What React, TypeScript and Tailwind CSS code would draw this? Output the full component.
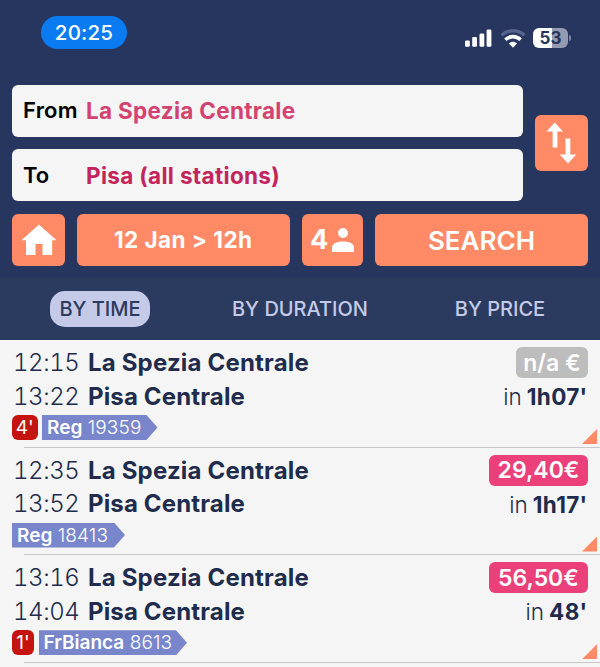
type Trip = {
  dep: string;
  from: string;
  arr: string;
  to: string;
  delay?: string;
  train: string;
  number: string;
  chipWidth: string;
  price: string;
  priceClass: string;
  duration: string;
};

const trips: Trip[] = [
  { dep: "12:15", from: "La Spezia Centrale", arr: "13:22", to: "Pisa Centrale", delay: "4'", train: "Reg", number: "19359", chipWidth: "w-[115.5px]", price: "n/a €", priceClass: "w-[72px] bg-[#bdbdbd]", duration: "1h07'" },
  { dep: "12:35", from: "La Spezia Centrale", arr: "13:52", to: "Pisa Centrale", train: "Reg", number: "18413", chipWidth: "w-[113px]", price: "29,40€", priceClass: "w-[99px] bg-[#ec407a]", duration: "1h17'" },
  { dep: "13:16", from: "La Spezia Centrale", arr: "14:04", to: "Pisa Centrale", delay: "1'", train: "FrBianca", number: "8613", chipWidth: "w-[148.5px]", price: "56,50€", priceClass: "w-[99px] bg-[#ec407a]", duration: "48'" },
];

function StatusBar() {
  return (
    <div className="flex h-[84px] items-start justify-between pt-4 pl-[41px] pr-[29px]">
      <div className="flex h-[33px] w-[86px] items-center justify-center rounded-full bg-[#0a7bf0] pt-px text-[20.5px] font-medium tracking-[0.2px] text-white">20:25</div>
      <div className="flex items-center pt-3">
        <svg width="27" height="18" viewBox="0 0 27 18" fill="#fff">
          <rect x="0" y="11.5" width="4.8" height="6.2" rx="1.3" />
          <rect x="7.2" y="8.1" width="4.8" height="9.6" rx="1.3" />
          <rect x="14.5" y="4.6" width="4.8" height="13.1" rx="1.3" />
          <rect x="21.6" y="0.4" width="4.8" height="17.3" rx="1.3" />
        </svg>
        <svg className="ml-[7.5px]" width="26" height="19" viewBox="0 0 26 19" fill="none">
          <path d="M1.5 6.3C8 .3 18 .3 24.5 6.3" stroke="#56638c" strokeWidth="3.4" />
          <path d="M5.4 10.8C9.7 6.6 16.3 6.6 20.6 10.8" stroke="#fff" strokeWidth="3.6" />
          <path d="M8.9 14.4C11.3 12.3 14.7 12.3 17.1 14.4L13 18.7Z" fill="#fff" />
        </svg>
        <div className="ml-[7.5px] flex h-5 w-[35px] items-center justify-center rounded-[6px] bg-linear-to-r from-white from-53% to-[#939ab1] to-53% pt-px text-[17px] font-bold text-[#27365f]">53</div>
        <div className="ml-px h-[6px] w-[2px] rounded-r-full bg-[#7d86a2]" />
      </div>
    </div>
  );
}

function SearchForm() {
  return (
    <div className="flex h-[194px] flex-col gap-3 px-3 pt-[0.5px]">
      <div className="flex items-center gap-3">
        <div className="flex w-[511px] flex-col gap-3">
          <div className="flex h-[52.5px] items-center rounded-[6px] bg-[#f5f5f5] pl-[11px] text-[22px] font-semibold">
            <span className="w-[63px] tracking-[0.2px] text-black">From</span>
            <span className="text-[22.5px] font-bold tracking-[0.3px] text-[#d4426f]">La Spezia Centrale</span>
          </div>
          <div className="flex h-[52px] items-center rounded-[6px] bg-[#f5f5f5] pt-px pl-[11px] text-[22px] font-semibold">
            <span className="w-[63px] text-black">To</span>
            <span className="text-[22.5px] font-bold tracking-[0.32px] text-[#c2245b]">Pisa (all stations)</span>
          </div>
        </div>
        <div className="flex h-14 w-[53px] items-center justify-center rounded-[6px] bg-[#ff8a65]">
          <svg width="53" height="56" viewBox="0 0 53 56" fill="#fff">
            <path d="M19.7 7.5L28 16.5H22.4V32.5H17.6V16.5H11.5Z" />
            <path d="M33 48.5L24.7 39.5H30.5V23.5H35.3V39.5H41.2Z" />
          </svg>
        </div>
      </div>
      <div className="mt-[0.5px] flex h-[52.5px] gap-3 text-[22px] font-semibold text-white">
        <div className="flex w-[53px] items-center justify-center rounded-[6px] bg-[#ff8a65]">
          <svg width="36" height="32" viewBox="0 0 36 32" fill="#fff">
            <path d="M18 0.5L35.5 16.3H31.2V31H21.5V20H14.5V31H5V16.3H0.5Z" />
          </svg>
        </div>
        <div className="flex w-[212.5px] items-center justify-center rounded-[6px] bg-[#ff8a65] pt-px text-[22.5px] font-bold tracking-[0.45px]">12 Jan &gt; 12h</div>
        <div className="flex w-[61.5px] items-center justify-center gap-1 rounded-[6px] bg-[#ff8a65] text-[27px] font-bold">
          4
          <svg width="22" height="26" viewBox="0 0 22 26" fill="#fff">
            <circle cx="11" cy="6" r="5" />
            <path d="M0 25V20.5C0 16.5 5 14.5 11 14.5S22 16.5 22 20.5V25Z" />
          </svg>
        </div>
        <div className="flex w-[213px] items-center justify-center rounded-[6px] bg-[#ff8a65] pt-px text-[26px]">SEARCH</div>
      </div>
    </div>
  );
}

function Tabs() {
  return (
    <div className="flex h-[62px] items-center bg-[#2a3b5f] text-[20px] font-medium text-[#c5cae9]">
      <div className="flex w-[200px] justify-center">
        <div className="flex h-9 w-[100px] items-center justify-center rounded-[15px] bg-[#c5cae9] text-[#2a3b5f]">BY TIME</div>
      </div>
      <div className="w-[200px] text-center">BY DURATION</div>
      <div className="w-[200px] text-center">BY PRICE</div>
    </div>
  );
}

function TripRow({ trip }: { trip: Trip }) {
  return (
    <div className="flex h-[107.6px] shrink-0 flex-col">
      <div className="flex h-[106.6px] justify-between pl-3">
        <div className="flex flex-col whitespace-nowrap text-[24px] leading-[33.5px] text-[#212c4c]">
          <div className="flex pt-[6px]">
            <span className="w-[76px] pl-px font-[340] tracking-[-0.45px] tabular-nums">{trip.dep}</span>
            <span className="font-bold tracking-[0.18px]">{trip.from}</span>
          </div>
          <div className="flex">
            <span className="w-[76px] pl-px font-[340] tracking-[-0.45px] tabular-nums">{trip.arr}</span>
            <span className="font-bold tracking-[0.15px]">{trip.to}</span>
          </div>
          <div className="mt-[2px] flex h-[25px] gap-[4.5px] text-[19px] leading-[26px] text-white">
            {trip.delay && (
              <span className={`rounded-[6px] bg-[#c5140f] text-center ${trip.delay === "4'" ? "w-[25.5px]" : "w-[22px]"}`}>{trip.delay}</span>
            )}
            <span className={`bg-[#7986cb] pl-[5px] [clip-path:polygon(0_0,calc(100%-11px)_0,100%_50%,calc(100%-11px)_100%,0_100%)] ${trip.chipWidth}`}>
              <b className="font-semibold">{trip.train}</b> <span className="font-light tracking-[0.15px]">{trip.number}</span>
            </span>
          </div>
        </div>
        <div className="flex flex-col items-end pt-[7px] pr-[3px] text-[#212c4c]">
          <div className={`mr-[9px] flex h-[31px] items-center justify-center rounded-[6px] pt-px text-[23px] font-semibold text-white ${trip.priceClass}`}>{trip.price}</div>
          <div className="mt-[2px] mr-[9.5px] text-[22.5px] leading-[33px] font-[340]">
            in<b className="ml-[5px] font-bold tracking-[0.3px]">{trip.duration}</b>
          </div>
          <div className="mt-4 h-[15px] w-[15px] bg-[#ff8a65] [clip-path:polygon(100%_0,100%_100%,0_100%)]" />
        </div>
      </div>
      <div className="ml-6 h-px bg-[#c8c8ca]" />
    </div>
  );
}

export default function App() {
  return (
    <div className="flex h-[667px] w-[600px] flex-col overflow-hidden bg-[#f5f5f5] font-['Inter','Liberation_Sans',sans-serif]">
      <header className="bg-[#27365f]">
        <StatusBar />
        <SearchForm />
        <Tabs />
      </header>
      <main className="flex flex-col">
        {trips.map((t) => (
          <TripRow key={t.dep} trip={t} />
        ))}
      </main>
    </div>
  );
}
